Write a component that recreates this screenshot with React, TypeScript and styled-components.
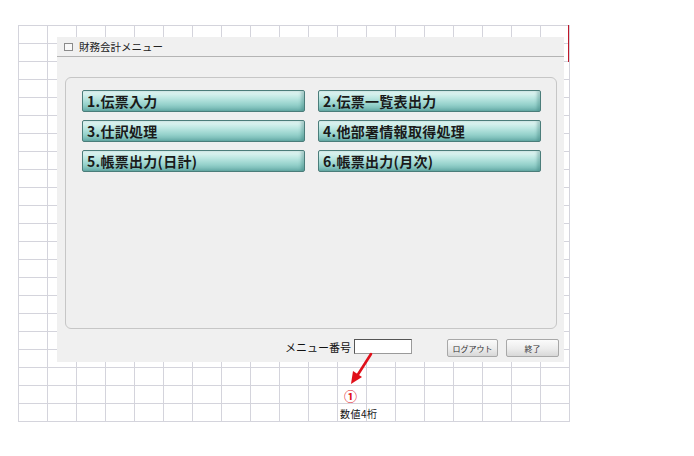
import React from "react";
import styled, { createGlobalStyle } from "styled-components";

const Global = createGlobalStyle`
  html, body { margin: 0; padding: 0; background: #ffffff; }
  body { font-family: "Noto Sans CJK JP", "Noto Sans", sans-serif; }
`;

const Page = styled.div`
  position: relative;
  width: 694px;
  height: 456px;
  background: #ffffff;
  overflow: hidden;
`;

const Sheet = styled.div`
  margin: 25px 0 0 18px;
  width: 551px;
  height: 396px;
  border-right: 1px solid #d4d4dc;
  border-bottom: 1px solid #d4d4dc;
  background-image:
    linear-gradient(to right, #d4d4dc 1px, transparent 1px),
    linear-gradient(to bottom, #d4d4dc 1px, transparent 1px);
  background-size: 29px 18px;
`;

const RedMark = styled.div`
  position: absolute;
  left: 568px;
  top: 25px;
  width: 1px;
  height: 37px;
  background: #c0182a;
`;

const Window = styled.div`
  position: absolute;
  left: 57px;
  top: 37px;
  width: 507px;
  height: 325px;
  background: #f0f0f0;
  display: flex;
  flex-direction: column;
  box-sizing: border-box;
`;

const TitleBar = styled.div`
  height: 19px;
  border-bottom: 1px solid #b4b4b4;
  display: flex;
  align-items: center;
  gap: 6px;
  padding-left: 7px;
  font-size: 10.5px;
  color: #222;
`;

const TitleIcon = styled.span`
  width: 7px;
  height: 6px;
  border: 1px solid #8a8a8a;
  background: #f8f8f8;
  display: inline-block;
`;

const MenuBox = styled.div`
  margin: 20px 7px 0 8px;
  height: 252px;
  box-sizing: border-box;
  border: 1px solid #c6c6c6;
  border-radius: 6px;
  background: #efefef;
  padding: 12px 0 0 16px;
`;

const MenuGrid = styled.div`
  display: grid;
  grid-template-columns: 223px 223px;
  column-gap: 13px;
  row-gap: 8px;
`;

const MenuButton = styled.button`
  height: 22px;
  box-sizing: border-box;
  border: 1px solid #4b7d7a;
  border-radius: 2px;
  background: linear-gradient(to bottom, #e8f8f6 0%, #bde7e2 35%, #93d0ca 70%, #6aafaa 100%);
  box-shadow: inset -3px 0 3px rgba(40, 110, 105, 0.3);
  text-align: left;
  padding: 0 0 0 4px;
  font-family: "Noto Sans CJK JP", sans-serif;
  font-size: 14px;
  font-weight: 700;
  color: #1a1a1a;
  line-height: 20px;
  letter-spacing: 0.3px;
  cursor: pointer;
`;

const Footer = styled.div`
  margin-top: 10px;
  display: flex;
  justify-content: flex-end;
  align-items: center;
  padding-right: 5px;
`;

const Label = styled.span`
  font-size: 11px;
  color: #111;
  margin-right: 3px;
  margin-top: -3px;
`;

const NumberInput = styled.input`
  width: 58px;
  height: 15px;
  box-sizing: border-box;
  border: 1px solid #9a9a9a;
  border-top-color: #555;
  border-left-color: #555;
  background: #ffffff;
  padding: 0;
  margin: -3px 27px 0 0;
`;

const SmallButton = styled.button<{ $w: number }>`
  width: ${(p) => p.$w}px;
  height: 18px;
  box-sizing: border-box;
  border: 1px solid #a8a8a8;
  border-radius: 2px;
  background: linear-gradient(to bottom, #fbfbfb 0%, #ececec 55%, #d8d8d8 100%);
  font-family: "Noto Sans CJK JP", sans-serif;
  font-size: 8px;
  color: #333;
  padding: 0;
  margin-left: 8px;
  cursor: pointer;
`;

const Note = styled.div`
  position: absolute;
  left: 333px;
  top: 352px;
  width: 60px;
  display: flex;
  flex-direction: column;
  align-items: flex-start;
`;

const Arrow = styled.svg`
  display: block;
  margin-left: 16px;
`;

const Circled = styled.span`
  color: #e0101a;
  font-family: "Noto Sans CJK JP", sans-serif;
  font-weight: 700;
  font-size: 13px;
  line-height: 14px;
  margin-left: 11px;
  margin-top: 3px;
`;

const NoteText = styled.span`
  font-size: 10px;
  color: #111;
  margin-top: 3px;
  margin-left: 7px;
  letter-spacing: 0.5px;
`;

const menus = [
  "1.伝票入力",
  "2.伝票一覧表出力",
  "3.仕訳処理",
  "4.他部署情報取得処理",
  "5.帳票出力(日計)",
  "6.帳票出力(月次)",
];

export default function App() {
  return (
    <Page>
      <Global />
      <Sheet />
      <RedMark />
      <Window>
        <TitleBar>
          <TitleIcon />
          財務会計メニュー
        </TitleBar>
        <MenuBox>
          <MenuGrid>
            {menus.map((m) => (
              <MenuButton key={m}>{m}</MenuButton>
            ))}
          </MenuGrid>
        </MenuBox>
        <Footer>
          <Label>メニュー番号</Label>
          <NumberInput />
          <SmallButton $w={51}>ログアウト</SmallButton>
          <SmallButton $w={53}>終了</SmallButton>
        </Footer>
      </Window>
      <Note>
        <Arrow width="26" height="34" viewBox="0 0 26 34">
          <line x1="22" y1="2" x2="8" y2="24" stroke="#e0101a" strokeWidth="2.6" strokeLinecap="round" />
          <polygon points="2,32 4,19 13,25" fill="#e0101a" />
        </Arrow>
        <Circled>①</Circled>
        <NoteText>数値4桁</NoteText>
      </Note>
    </Page>
  );
}
